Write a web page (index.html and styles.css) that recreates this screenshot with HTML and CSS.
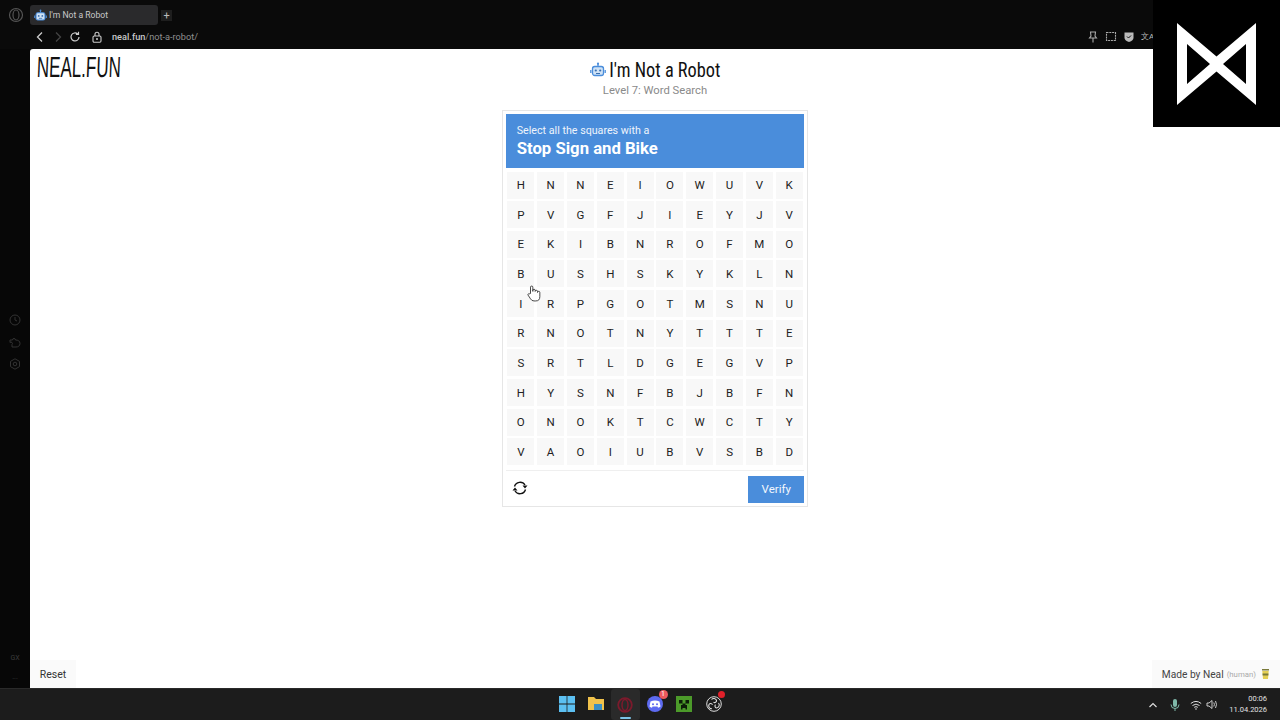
FILE: index.html
```html
<!DOCTYPE html>
<html lang="en">
<head>
<meta charset="utf-8">
<title>I'm Not a Robot</title>
<link rel="stylesheet" href="styles.css">
</head>
<body>
<div class="desktop">
  <header class="chrome">
    <div class="tabrow">
      <svg class="opera-mark" width="16" height="16" viewBox="0 0 16 16"><circle cx="8" cy="8" r="6.5" fill="none" stroke="#555" stroke-width="1.2"/><ellipse cx="8" cy="8" rx="3" ry="5" fill="none" stroke="#555" stroke-width="1.2"/></svg>
      <div class="tab">
        <svg width="13" height="13" viewBox="0 0 16 16"><use href="#robot"/></svg>
        <span>I'm Not a Robot</span>
      </div>
      <div class="newtab">+</div>
    </div>
    <div class="addressrow">
      <div class="nav">
        <svg width="12" height="12" viewBox="0 0 12 12"><path d="M8 1.5 3.5 6 8 10.500" fill="none" stroke="#ccc" stroke-width="1.3"/></svg>
        <svg width="12" height="12" viewBox="0 0 12 12"><path d="M4 1.500 8.500 6 4 10.500" fill="none" stroke="#444" stroke-width="1.300"/></svg>
        <svg width="12" height="12" viewBox="0 0 12 12"><path d="M10 6a4 4 0 1 1-1.300-3M9.500 .8v2.600H6.900" fill="none" stroke="#ccc" stroke-width="1.200"/></svg>
        <svg class="lock" width="12" height="12" viewBox="0 0 12 12"><rect x="2" y="5" width="8" height="6.200" rx="1.200" fill="none" stroke="#ccc" stroke-width="1.100"/><path d="M4 5V3.200a2 2 0 0 1 4 0V5" fill="none" stroke="#ccc" stroke-width="1.100"/><circle cx="6" cy="8" r="1" fill="#ccc"/></svg>
      </div>
      <div class="url"><b>neal.fun</b>/not-a-robot/</div>
      <div class="tools">
        <svg width="12" height="12" viewBox="0 0 12 12"><path d="M3.500 1h5L8 5l1.500 2h-7L4 5zM6 7v4.500" fill="none" stroke="#aaa" stroke-width="1.100"/></svg>
        <svg width="12" height="12" viewBox="0 0 12 12"><path d="M1.500 1.500h9v8h-9z" fill="none" stroke="#aaa" stroke-width="1.100" stroke-dasharray="2 .8"/></svg>
        <svg width="12" height="12" viewBox="0 0 12 12"><path d="M1.500 1.500h9v5q0 3-4.500 4.500Q1.500 9.500 1.500 6.500z" fill="#bbb"/><path d="m4 5.500 1.500 1.500L8 4.500" fill="none" stroke="#111" stroke-width="1"/></svg>
        <span class="translate">文A</span>
      </div>
    </div>
  </header>

  <div class="middle">
    <aside class="sidebar">
      <div class="side-icons">
        <svg width="12" height="12" viewBox="0 0 12 12"><circle cx="6" cy="6" r="5" fill="none" stroke="#333" stroke-width="1"/><path d="M6 3v3l2 1" fill="none" stroke="#333"/></svg>
        <svg width="12" height="12" viewBox="0 0 12 12"><path d="M1 6.500V4h2.500a1.500 1.500 0 0 1 3 0C9 4 11 5 11 7.500S9 11 7 11H3V8.500a1 1 0 0 0-2-2z" fill="none" stroke="#333"/></svg>
        <svg width="12" height="12" viewBox="0 0 12 12"><path d="M6 .8 10.500 3.400v5.200L6 11.200 1.500 8.600V3.400z" fill="none" stroke="#333"/><circle cx="6" cy="6" r="1.800" fill="none" stroke="#333"/></svg>
      </div>
      <div class="side-bottom">
        <span class="gx">GX</span>
        <span class="more">...</span>
      </div>
    </aside>

    <main class="page">
      <div class="page-head">
        <div class="brand"><span class="brand-text">NEAL.FUN</span></div>
        <div class="heading">
          <h1 class="title">
            <svg width="16" height="16" viewBox="0 0 16 16"><use href="#robot"/></svg>
            <span class="title-text">I'm Not a Robot</span>
          </h1>
          <p class="subtitle">Level 7: Word Search</p>
        </div>
        <div></div>
      </div>

      <section class="captcha">
        <div class="prompt">
          <div class="prompt-small">Select all the squares with a</div>
          <div class="prompt-big">Stop Sign and Bike</div>
        </div>
        <div class="grid">
          <div class="cell">H</div><div class="cell">N</div><div class="cell">N</div><div class="cell">E</div><div class="cell">I</div><div class="cell">O</div><div class="cell">W</div><div class="cell">U</div><div class="cell">V</div><div class="cell">K</div>
          <div class="cell">P</div><div class="cell">V</div><div class="cell">G</div><div class="cell">F</div><div class="cell">J</div><div class="cell">I</div><div class="cell">E</div><div class="cell">Y</div><div class="cell">J</div><div class="cell">V</div>
          <div class="cell">E</div><div class="cell">K</div><div class="cell">I</div><div class="cell">B</div><div class="cell">N</div><div class="cell">R</div><div class="cell">O</div><div class="cell">F</div><div class="cell">M</div><div class="cell">O</div>
          <div class="cell">B</div><div class="cell">U</div><div class="cell">S</div><div class="cell">H</div><div class="cell">S</div><div class="cell">K</div><div class="cell">Y</div><div class="cell">K</div><div class="cell">L</div><div class="cell">N</div>
          <div class="cell">I</div><div class="cell">R</div><div class="cell">P</div><div class="cell">G</div><div class="cell">O</div><div class="cell">T</div><div class="cell">M</div><div class="cell">S</div><div class="cell">N</div><div class="cell">U</div>
          <div class="cell">R</div><div class="cell">N</div><div class="cell">O</div><div class="cell">T</div><div class="cell">N</div><div class="cell">Y</div><div class="cell">T</div><div class="cell">T</div><div class="cell">T</div><div class="cell">E</div>
          <div class="cell">S</div><div class="cell">R</div><div class="cell">T</div><div class="cell">L</div><div class="cell">D</div><div class="cell">G</div><div class="cell">E</div><div class="cell">G</div><div class="cell">V</div><div class="cell">P</div>
          <div class="cell">H</div><div class="cell">Y</div><div class="cell">S</div><div class="cell">N</div><div class="cell">F</div><div class="cell">B</div><div class="cell">J</div><div class="cell">B</div><div class="cell">F</div><div class="cell">N</div>
          <div class="cell">O</div><div class="cell">N</div><div class="cell">O</div><div class="cell">K</div><div class="cell">T</div><div class="cell">C</div><div class="cell">W</div><div class="cell">C</div><div class="cell">T</div><div class="cell">Y</div>
          <div class="cell">V</div><div class="cell">A</div><div class="cell">O</div><div class="cell">I</div><div class="cell">U</div><div class="cell">B</div><div class="cell">V</div><div class="cell">S</div><div class="cell">B</div><div class="cell">D</div>
        </div>
        <div class="actions">
          <svg class="refresh" width="18" height="18" viewBox="0 0 18 18"><path d="M3.500 7.500A5.800 5.800 0 0 1 14 6M14.500 10.500A5.800 5.800 0 0 1 4 12" fill="none" stroke="#111" stroke-width="1.400"/><path d="M11.500 6.500h5l-2.500 3zM6.500 11.500h-5l2.500-3z" fill="#111"/></svg>
          <button class="verify">Verify</button>
        </div>
      </section>

      <div class="page-foot">
        <div class="reset">Reset</div>
        <div class="credit">
          <span>Made by Neal</span> <span class="human">(human)</span>
          <svg class="cup" width="9" height="12" viewBox="0 0 9 12"><path d="M1 1h7v1.500H1z" fill="#7a7a3a"/><path d="M1.300 3h6.400L7 11H2z" fill="#e4cf55"/><path d="M1.500 5.500h6l-.2 2H1.700z" fill="#7a7a3a"/></svg>
        </div>
      </div>

      <svg class="hand" width="14" height="17" viewBox="0 0 12 16" preserveAspectRatio="none"><path d="M3 8V2a1 1 0 0 1 2 0v4-1a1 1 0 0 1 2 0v1a1 1 0 0 1 2 0v1a1 1 0 0 1 2 0v4q0 4-3.500 4H6Q4 15 3 13L.9 9.500C.4 8.500 1.700 7.600 2.500 8.500z" fill="#fff" stroke="#333" stroke-width=".8"/></svg>
    </main>
  </div>

  <footer class="taskbar">
    <div class="task-icons">
      <div class="task-icon">
        <svg width="16" height="16" viewBox="0 0 16 16"><path d="M0 0h7.600v7.600H0zM8.400 0H16v7.600H8.400zM0 8.400h7.600V16H0zM8.400 8.400H16V16H8.400z" fill="#5cc0f2"/></svg>
      </div>
      <div class="task-icon">
        <svg width="18" height="16" viewBox="0 0 18 16"><path d="M1 1h6l2 2h8v11H1z" fill="#f0c24c"/><path d="M7 8h8v6H7z" fill="#3b8fc4"/></svg>
      </div>
      <div class="task-icon active">
        <svg width="16" height="16" viewBox="0 0 16 16"><circle cx="8" cy="8" r="6.800" fill="none" stroke="#7c1a2c" stroke-width="1.800"/><ellipse cx="8" cy="8" rx="3" ry="5.500" fill="none" stroke="#7c1a2c" stroke-width="1.500"/></svg>
      </div>
      <div class="task-icon">
        <svg width="16" height="16" viewBox="0 0 16 16"><circle cx="8" cy="8" r="8" fill="#5d6af0"/><path d="M3.500 5.500q4.500-2 9 0l1 5q-1 1-2.500 1.200L10.500 10.500h-5L5 11.700Q3.500 11.500 2.500 10.500z" fill="#fff"/><circle cx="6" cy="8.300" r="1" fill="#5d6af0"/><circle cx="10" cy="8.300" r="1" fill="#5d6af0"/></svg>
        <span class="badge">1</span>
      </div>
      <div class="task-icon">
        <svg width="16" height="16" viewBox="0 0 16 16"><path d="M0 0h16v16H0z" fill="#4c9a2a"/><path d="M3 4h3.500v3.500H3zM9.500 4H13v3.500H9.500zM6.500 7.500h3V9H11v4.500H9.500V12h-3v1.500H5V9h1.500z" fill="#0d1d08"/></svg>
      </div>
      <div class="task-icon">
        <svg width="16" height="16" viewBox="0 0 16 16"><circle cx="8" cy="8" r="7.300" fill="#1c1c1c" stroke="#ddd" stroke-width="1"/><path d="M5.500 3.500a3 3 0 0 1 5 .8 2 2 0 0 1-3 2M12.500 7a3 3 0 0 1-2 5 2 2 0 0 1-1-3.300M6 12.800a3 3 0 0 1-3-4.300 2 2 0 0 1 3.500.2" fill="none" stroke="#ddd" stroke-width="1.100"/></svg>
        <span class="dot"></span>
      </div>
    </div>
    <div class="tray">
      <svg class="tray-chevron" width="10" height="10" viewBox="0 0 10 10"><path d="m1.500 7 3.500-3.500L8.500 7" fill="none" stroke="#ddd" stroke-width="1.200"/></svg>
      <svg class="tray-mic" width="10" height="14" viewBox="0 0 10 14"><rect x="3" y="1" width="4" height="8" rx="2" fill="#7fb8a8"/><path d="M1 6.500a4 4 0 0 0 8 0M5 10.500V13" fill="none" stroke="#7fb8a8"/></svg>
      <svg class="tray-wifi" width="12" height="10" viewBox="0 0 12 10"><path d="M.8 3.500q5.200-4.200 10.400 0M2.500 5.500q3.500-2.800 7 0M4.200 7.300q1.800-1.300 3.600 0" fill="none" stroke="#ddd"/><circle cx="6" cy="9" r=".8" fill="#ddd"/></svg>
      <svg class="tray-sound" width="12" height="11" viewBox="0 0 12 11"><path d="M1 4h2l3-2.500v8L3 7H1z" fill="none" stroke="#ddd" stroke-width=".9"/><path d="M7.800 3.500q1.200 2 0 4M9.500 2q2 3.500 0 7" fill="none" stroke="#ddd" stroke-width=".9"/></svg>
      <div class="clock"><span>00:06</span><span>11.04.2026</span></div>
    </div>
  </footer>

  <div class="watermark">
    <svg width="80" height="82" viewBox="0 0 80 82"><path fill-rule="evenodd" fill="#fff" d="M0 0 39.500 33.500 79 0V82L39.500 48.500 0 82ZM10 21V61L33 41ZM69 21 46 41 69 61Z"/></svg>
  </div>
</div>

<svg class="defs" width="0" height="0">
  <symbol id="robot" viewBox="0 0 16 16">
    <rect x="2.500" y="4.500" width="11" height="9" rx="2.200" fill="#cfe2f5" stroke="#4a8ddb" stroke-width="1.300"/>
    <path d="M8 4.500V2M.8 8v3M15.200 8v3" stroke="#4a8ddb" stroke-width="1.300" fill="none"/>
    <circle cx="8" cy="1.700" r="1.100" fill="#4a8ddb"/>
    <circle cx="5.800" cy="8.500" r="1.100" fill="#3a6fb0"/>
    <circle cx="10.200" cy="8.500" r="1.100" fill="#3a6fb0"/>
    <path d="M6 11.500h4" stroke="#3a6fb0" stroke-width="1"/>
  </symbol>
</svg>
</body>
</html>
```
FILE: styles.css
```css
* { box-sizing: border-box; }
html, body { margin: 0; padding: 0; }
body { font-family: Roboto, "Liberation Sans", sans-serif; background: #000; }

.desktop {
  position: relative;
  width: 1280px;
  height: 720px;
  display: flex;
  flex-direction: column;
  overflow: hidden;
  background: #0a0a0a;
}

/* browser chrome */
.chrome { height: 49px; flex: none; display: flex; flex-direction: column; }
.tabrow { height: 29px; display: flex; align-items: center; padding-top: 1px; }
.opera-mark { margin: 0 6px 0 8px; }
.tab {
  width: 128px; height: 20px; background: #2a2a2c; border-radius: 3px;
  display: flex; align-items: center; gap: 2px; padding-left: 4px;
  color: #c9c9c9; font-size: 8.600px;
}
.newtab {
  width: 11px; height: 11px; margin-left: 3px; background: #1e1e1e; color: #bbb;
  font-size: 11px; line-height: 11px; text-align: center;
}
.addressrow { flex: 1; display: flex; align-items: center; padding: 0 0 5px 34px; }
.nav { display: flex; gap: 5.500px; align-items: center; }
.nav .lock { margin-left: 4.500px; }
.url { margin-left: 9px; font-size: 9.200px; color: #8f8f8f; }
.url b { color: #c8c8c8; font-weight: 500; }
.tools { margin-left: auto; margin-right: 127px; display: flex; gap: 6px; align-items: center; }
.translate { font-size: 8px; color: #bbb; width: 12px; white-space: nowrap; }

.middle { flex: 1; display: flex; min-height: 0; }

/* sidebar */
.sidebar { width: 30px; flex: none; display: flex; flex-direction: column; align-items: center; padding-top: 265px; background: #070707; }
.side-icons { display: flex; flex-direction: column; gap: 10px; }
.side-bottom { margin-top: auto; display: flex; flex-direction: column; align-items: center; gap: 8px; padding-bottom: 5px; color: #3c3c3c; font-size: 7px; }
.gx, .more { line-height: 11px; }

/* page */
.page {
  position: relative; flex: 1; background: #fff; border-top-left-radius: 3px;
  display: flex; flex-direction: column; align-items: center;
}
.page-head { width: 100%; display: grid; grid-template-columns: 1fr auto 1fr; height: 61px; }
.brand { padding: 3px 0 0 7px; }
.brand-text {
  display: inline-block; font-size: 29px; line-height: 30px; color: #111;
  transform: scaleX(.585) skewX(-4deg); transform-origin: left center; white-space: nowrap;
  font-family: "Liberation Sans", sans-serif;
}
.heading { text-align: center; padding-top: 9px; }
.title { margin: 0; display: flex; justify-content: center; align-items: center; gap: 3px; font-weight: 400; font-size: 20px; line-height: 24px; color: #111; }
.title-text { display: inline-block; font-stretch: condensed; transform: scaleX(.915); margin: 0 -5px; white-space: nowrap; }
.subtitle { margin: 1px 0 0; font-size: 11.250px; line-height: 16px; color: #8a8a8a; }

.captcha { width: 306.500px; height: 397px; flex: none; border: 1px solid #e6e6e6; padding: 3px; display: flex; flex-direction: column; background: #fff; }
.prompt { height: 54px; flex: none; background: #4a8ddb; color: #fff; padding: 10px 11px 0; }
.prompt-small { font-size: 10.700px; line-height: 14px; color: #eef4fc; }
.prompt-big { font-size: 16.700px; line-height: 20px; font-weight: 700; margin-top: 1px; }
.grid { margin-top: 3.500px; padding: 0 1.500px; display: grid; grid-template-columns: repeat(10, 1fr); grid-auto-rows: 27px; column-gap: 2.700px; row-gap: 2.670px; }
.cell { background: #f8f8f8; display: flex; align-items: center; justify-content: center; font-size: 11.500px; font-weight: 400; color: #222; }
.actions { margin-top: 4.500px; border-top: 1px solid #efefef; flex: 1; display: flex; justify-content: space-between; align-items: center; padding: 5px 0 0 5px; }
.refresh { flex: none; margin-bottom: 2px; }
.verify { width: 56px; height: 27px; border: 0; background: #4a8ddb; color: #f2f7fd; font: 400 11.500px Roboto, sans-serif; padding: 0; }

.page-foot { margin-top: auto; width: 100%; display: flex; justify-content: space-between; align-items: flex-end; }
.reset { width: 46px; height: 28px; background: #fafafa; color: #333; font-size: 10.500px; display: flex; align-items: center; justify-content: center; }
.credit { height: 28px; padding: 0 10px 0 10px; background: #fafafa; color: #444; font-size: 10.200px; display: flex; align-items: center; gap: 3px; white-space: nowrap; }
.human { color: #aaa; font-size: 7.800px; }
.cup { margin-left: 2px; }

.hand { position: absolute; left: 497px; top: 236px; }

/* taskbar */
.taskbar { height: 32px; flex: none; background: #1c1c1c; border-top: 1px solid #2a2a2a; display: flex; align-items: center; position: relative; }
.task-icons { position: absolute; left: 552px; top: 0; display: flex; }
.task-icon { position: relative; width: 29.400px; height: 30px; display: flex; align-items: center; justify-content: center; }
.task-icon.active { background: #2a2a2a; border-radius: 3px; height: 31px; }
.task-icon.active::after { content: ""; position: absolute; bottom: 1px; left: 9px; width: 11px; height: 2px; border-radius: 1px; background: #7cc4e8; }
.badge { position: absolute; right: 2px; top: 1px; width: 9px; height: 9px; border-radius: 50%; background: #ed5a5f; color: #fff; font-size: 7px; line-height: 9px; text-align: center; }
.dot { position: absolute; right: 3px; top: 2px; width: 7px; height: 7px; border-radius: 50%; background: #e0202a; }
.tray { margin-left: auto; display: flex; align-items: center; padding-right: 13px; }
.tray-mic { margin-left: 12px; }
.tray-wifi { margin-left: 10px; }
.tray-sound { margin-left: 4px; }
.clock { margin-left: 11px; display: flex; flex-direction: column; align-items: flex-end; color: #e2e2e2; font-size: 7.500px; line-height: 11px; padding-bottom: 2px; }

/* overlay */
.watermark { position: absolute; right: 0; top: 0; width: 127px; height: 127px; background: #000; padding: 23px 0 0 24px; }
.defs { position: absolute; }
```
